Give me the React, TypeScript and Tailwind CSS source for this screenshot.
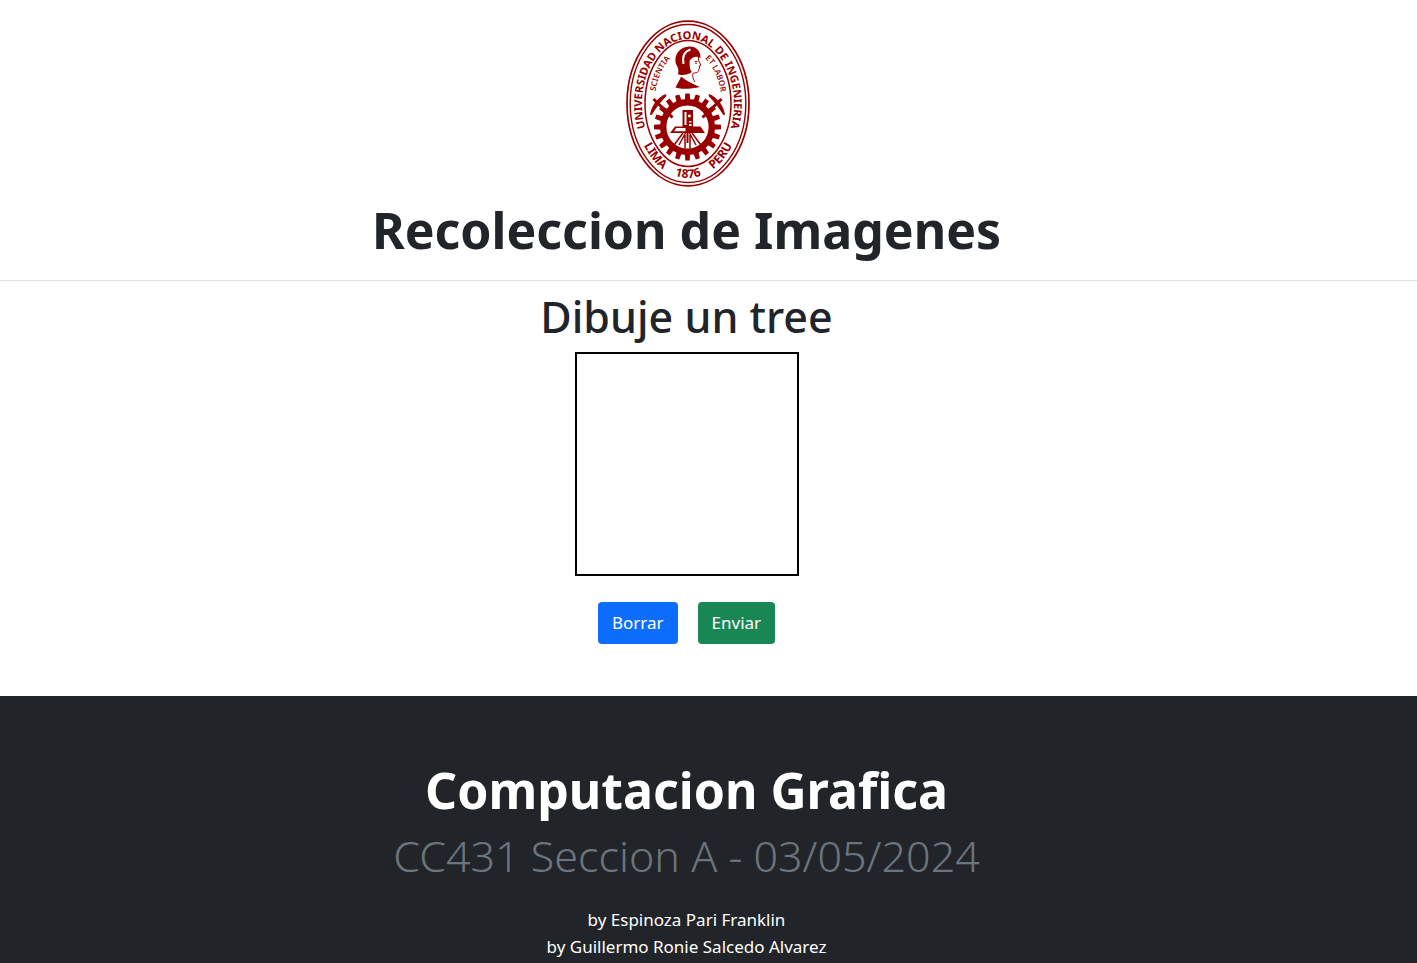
const RED = '#980000';
const TOOTH_COUNT = 20;
const teeth = Array.from({ length: TOOTH_COUNT }, (_, i) => (i * 360) / TOOTH_COUNT);

function Pickaxe() {
  return (
    <g>
      <path d="M29.5 79 L48.5 97.5" stroke={RED} strokeWidth="3" />
      <path d="M26.5 94.5 C28 86 33 78.5 41.5 74.5 L42 76 C37 81 32 87 27.5 94.5 Z" fill={RED} stroke={RED} strokeWidth="1" />
    </g>
  );
}

function Seal() {
  return (
    <svg viewBox="0 0 126 168" className="h-[168px] w-[126px]" role="img" aria-label="Universidad Nacional de Ingenieria">
      <defs>
        <path id="seal-top" d="M64 149 A46 65 0 0 1 64 19 A46 65 0 0 1 64 149" />
        <path id="seal-bottom" d="M10.5 83.5 A53.5 74.5 0 0 0 117.5 83.5" />
        <path id="seal-left" d="M30.6 80 A34 53 0 0 1 55.5 32.7" />
        <path id="seal-right" d="M72.5 32.7 A34 53 0 0 1 97.4 80" />
      </defs>
      <g fill="none" stroke={RED}>
        <ellipse cx="64" cy="83.5" rx="61" ry="82.4" strokeWidth="1.7" />
        <ellipse cx="64" cy="83.5" rx="57.8" ry="79" strokeWidth="1.4" />
        <ellipse cx="64" cy="83.5" rx="43" ry="63" strokeWidth="1.5" />
      </g>
      <g fill={RED} fontFamily="Noto Sans, sans-serif" fontWeight="700" textAnchor="middle">
        <text fontSize="11">
          <textPath href="#seal-top" startOffset="50%">UNIVERSIDAD NACIONAL DE INGENIERIA</textPath>
        </text>
        <text fontSize="12">
          <textPath href="#seal-bottom" startOffset="29%">LIMA</textPath>
        </text>
        <text fontSize="12">
          <textPath href="#seal-bottom" startOffset="50%">1876</textPath>
        </text>
        <text fontSize="12">
          <textPath href="#seal-bottom" startOffset="71%">PERU</textPath>
        </text>
        <text fontSize="8" fontWeight="600">
          <textPath href="#seal-left" startOffset="48%">SCIENTIA</textPath>
        </text>
        <text fontSize="8" fontWeight="600">
          <textPath href="#seal-right" startOffset="52%">ET LABOR</textPath>
        </text>
      </g>

      {/* Helmeted bust */}
      <path d="M65 26.5 C56 27 50.5 34 51.5 42 C52 46 55.5 47 54 54 C57 56 64 55 68 52 C65 49 66 45 65.5 41 C68 37 73 35.5 76.5 38 C77 31 72 26 65 26.5 Z" fill={RED} />
      <path d="M66.5 29.5 C60 31.5 58 36 59.5 44" fill="none" stroke="#fff" strokeWidth="2" />
      <path d="M74.5 37 C74 40 75 42 77 45 L75.3 46 L75.6 48.2 L74.8 49 C75.2 52 73 53 69.5 53 C68 55 68.5 58 71 62" fill="none" stroke={RED} strokeWidth="1" />
      <path d="M70.5 41.5 L73.5 41.5 M71 43.3 L73 43.3" stroke={RED} strokeWidth="0.9" />
      <path d="M57 56.5 C56 60 53 64 51.5 67.5 C58 69.5 67 69 76 67 C69 64 62 61 57 56.5 Z" fill={RED} />

      {/* Gear */}
      <ellipse cx="63.5" cy="107" rx="24.3" ry="24.8" fill="none" stroke={RED} strokeWidth="6.4" />
      {teeth.map((angle) => (
        <path key={angle} d="M60.8 81 L61.3 73.5 L65.7 73.5 L66.2 81 Z" fill={RED} transform={`rotate(${angle} 63.5 107)`} />
      ))}
      <Pickaxe />
      <g transform="translate(127 0) scale(-1 1)">
        <Pickaxe />
      </g>

      {/* Surveying instrument */}
      <path d="M58.5 90 H69 V107 H58.5 Z" fill={RED} />
      <path d="M60.5 92 H62.5 V105 H60.5 Z M65 101 H67.5 V102.5 H65 Z M65 104 H67.5 V106 H65 Z" fill="#fff" />
      <circle cx="65.4" cy="96" r="1.4" fill="#fff" />
      <path d="M51 106.5 H76.5 L81 113 H46 Z" fill={RED} />
      <path d="M50 111.3 L52.3 108 H61.5 V111.3 Z" fill="#fff" />
      <path d="M59 113 L50.5 124.5 M61.5 113 L55 125 M61 115 V128.5 M66 115 V128.5 M65.5 113 L72 125 M68 113 L76.5 124.5" fill="none" stroke={RED} strokeWidth="1.5" />
      <path d="M63.5 113 V123" stroke={RED} strokeWidth="2" />
    </svg>
  );
}

export default function App() {
  return (
    <div className="flex min-h-screen flex-col bg-white font-['Noto_Sans',sans-serif] text-[17px] text-[#212529]">
      <header className="flex flex-col items-center border-b border-[#dee2e6] pt-5 pr-11 pb-4">
        <Seal />
        <h1 className="pt-2 text-center text-[50px] leading-[68px] font-bold">Recoleccion de Imagenes</h1>
      </header>
      <main className="flex flex-col items-center pt-2 pr-11 pb-13">
        <h2 className="text-center text-[43px] leading-[55px] font-medium">Dibuje un tree</h2>
        <canvas width="220" height="220" aria-label="Dibujo" className="mt-2 border-2 border-black" />
        <div className="mt-[26px] flex gap-5">
          <button type="button" className="rounded bg-[#0d6efd] px-3.5 py-2 leading-[26px] text-white">
            Borrar
          </button>
          <button type="button" className="rounded bg-[#198754] px-3.5 py-2 leading-[26px] text-white">
            Enviar
          </button>
        </div>
      </main>
      <footer className="grow bg-[#212529] pt-16 pr-11 text-center text-white">
        <h2 className="text-[50px] leading-[60px] font-bold">Computacion Grafica</h2>
        <p className="mt-2.5 text-[43px] leading-[52px] font-light text-[#6c757d]">CC431 Seccion A - 03/05/2024</p>
        <div className="mt-6 leading-[27px]">
          <p>by Espinoza Pari Franklin</p>
          <p>by Guillermo Ronie Salcedo Alvarez</p>
        </div>
      </footer>
    </div>
  );
}
